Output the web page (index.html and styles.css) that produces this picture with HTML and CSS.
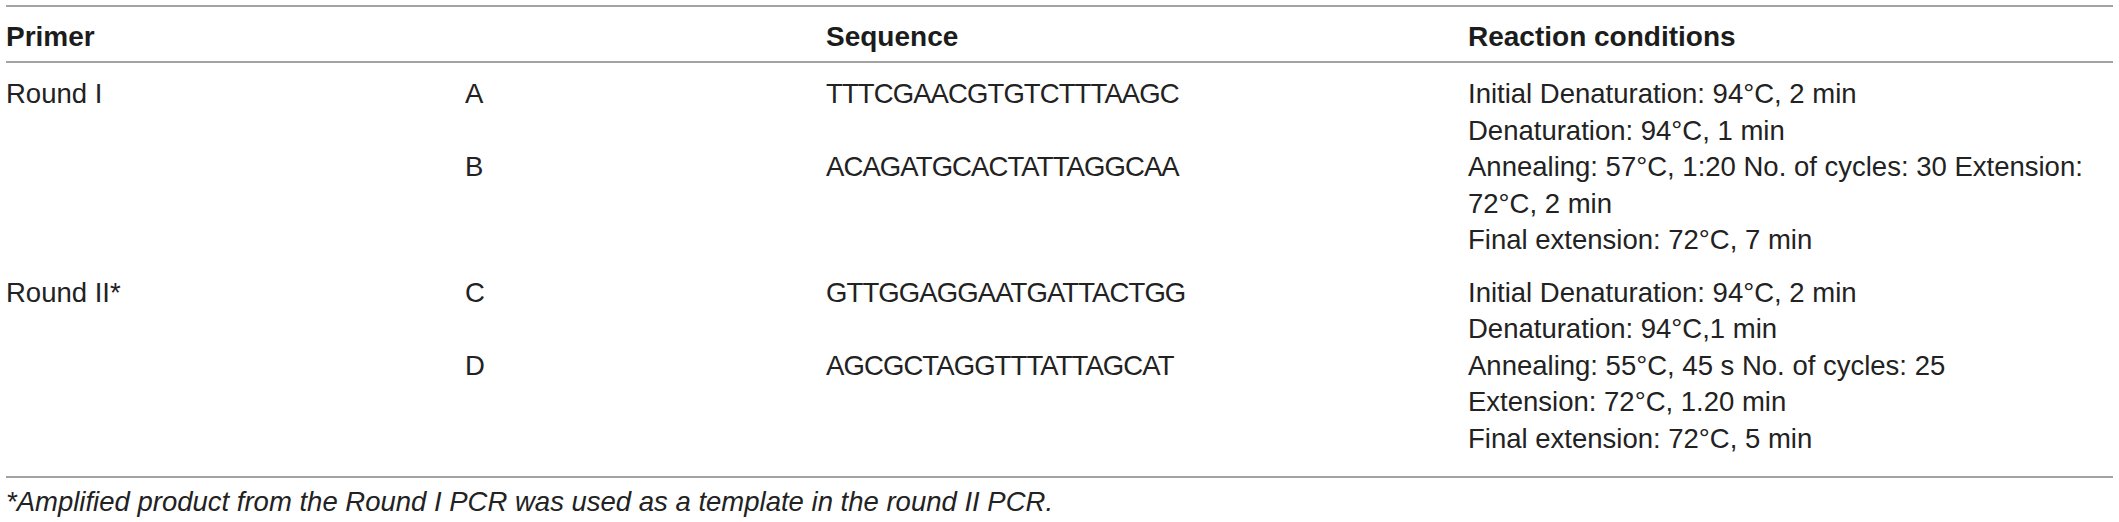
FILE: index.html
```html
<!DOCTYPE html>
<html lang="en">
<head>
<meta charset="utf-8">
<title>Primer table</title>
<link rel="stylesheet" href="styles.css">
</head>
<body>
<div class="wrap">
  <div class="table">
    <div class="row head">
      <div class="cell">Primer</div>
      <div class="cell"></div>
      <div class="cell">Sequence</div>
      <div class="cell">Reaction conditions</div>
    </div>
    <div class="row body first">
      <div class="cell">Round I</div>
      <div class="cell pair"><span>A</span><span>B</span></div>
      <div class="cell pair seq"><span>TTTCGAACGTGTCTTTAAGC</span><span>ACAGATGCACTATTAGGCAA</span></div>
      <div class="cell lines">
        <span>Initial Denaturation: 94°C, 2 min</span>
        <span>Denaturation: 94°C, 1 min</span>
        <span>Annealing: 57°C, 1:20 No. of cycles: 30 Extension:</span>
        <span>72°C, 2 min</span>
        <span>Final extension: 72°C, 7 min</span>
      </div>
    </div>
    <div class="row body last">
      <div class="cell">Round II*</div>
      <div class="cell pair"><span>C</span><span>D</span></div>
      <div class="cell pair seq"><span>GTTGGAGGAATGATTACTGG</span><span>AGCGCTAGGTTTATTAGCAT</span></div>
      <div class="cell lines">
        <span>Initial Denaturation: 94°C, 2 min</span>
        <span>Denaturation: 94°C,1 min</span>
        <span>Annealing: 55°C, 45 s No. of cycles: 25</span>
        <span>Extension: 72°C, 1.20 min</span>
        <span>Final extension: 72°C, 5 min</span>
      </div>
    </div>
  </div>
  <p class="note">*Amplified product from the Round I PCR was used as a template in the round II PCR.</p>
</div>
</body>
</html>
```
FILE: styles.css
```css
html, body {
  margin: 0;
  padding: 0;
  background: #ffffff;
}

body {
  font-family: "Liberation Sans", Arial, sans-serif;
  color: #222222;
}

.wrap {
  padding: 5px 6px 0 6px;
}

.table {
  width: 2107px;
  border-top: 2px solid #a3a3a3;
  border-bottom: 2px solid #a3a3a3;
}

.row {
  display: grid;
  grid-template-columns: 459px 361px 642px 1fr;
}

.head {
  font-size: 28px;
  font-weight: bold;
  line-height: 36px;
  color: #1c1c1c;
  padding: 12px 0 6px;
  border-bottom: 2px solid #a3a3a3;
}

.body {
  font-size: 27.5px;
  line-height: 36.5px;
}

.first {
  padding: 13px 0 8px;
}

.last {
  padding: 8px 0 19px;
}

.cell {
  white-space: nowrap;
}

.pair {
  display: flex;
  flex-direction: column;
  gap: 36.5px;
}

.seq {
  letter-spacing: -0.9px;
}

.lines {
  display: flex;
  flex-direction: column;
}

.note {
  margin: 0;
  padding-top: 6px;
  font-size: 27.5px;
  line-height: 36px;
  font-style: italic;
  color: #222222;
}
```
